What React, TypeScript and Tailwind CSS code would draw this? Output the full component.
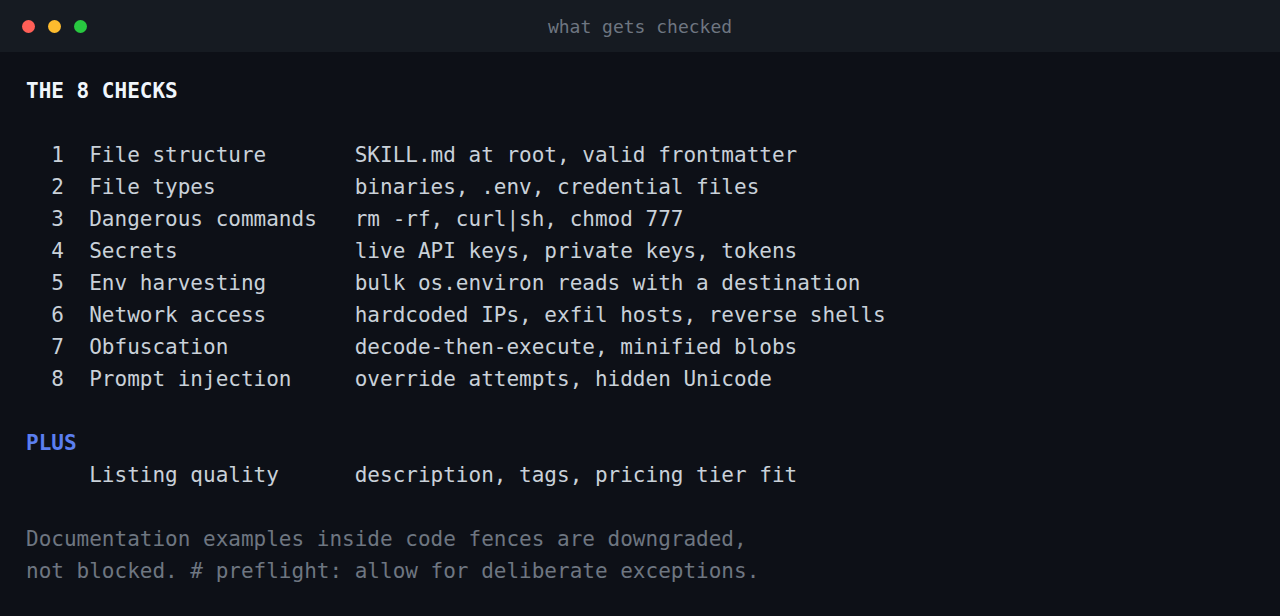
import React from 'react';

const checks = [
  ['File structure', 'SKILL.md at root, valid frontmatter'],
  ['File types', 'binaries, .env, credential files'],
  ['Dangerous commands', 'rm -rf, curl|sh, chmod 777'],
  ['Secrets', 'live API keys, private keys, tokens'],
  ['Env harvesting', 'bulk os.environ reads with a destination'],
  ['Network access', 'hardcoded IPs, exfil hosts, reverse shells'],
  ['Obfuscation', 'decode-then-execute, minified blobs'],
  ['Prompt injection', 'override attempts, hidden Unicode'],
];

export default function App() {
  return (
    <div className="w-[1280px] h-[616px] bg-[#0d1017] overflow-hidden flex flex-col font-['DejaVu_Sans_Mono',monospace]">
      {/* Title bar */}
      <div className="h-[52px] shrink-0 bg-[#161b22] flex items-center px-[22px] relative">
        <div className="flex gap-[13px]">
          <span className="w-[13px] h-[13px] rounded-full bg-[#ff5f57]" />
          <span className="w-[13px] h-[13px] rounded-full bg-[#febc2e]" />
          <span className="w-[13px] h-[13px] rounded-full bg-[#28c840]" />
        </div>
        <div className="absolute inset-0 flex items-center justify-center text-[18px] text-[#6e7681]">
          what gets checked
        </div>
      </div>

      {/* Body */}
      <pre className="px-[26px] pt-[23px] text-[21px] leading-[32px] text-[#c9d1d9] whitespace-pre font-['DejaVu_Sans_Mono',monospace]">
        <div className="font-bold text-[#f0f6fc]">THE 8 CHECKS</div>
        <div>{' '}</div>
        {checks.map(([name, desc], i) => (
          <div key={name}>
            {'  ' + (i + 1) + '  ' + name.padEnd(21, ' ') + desc}
          </div>
        ))}
        <div>{' '}</div>
        <div className="font-bold text-[#5b7ff0]">PLUS</div>
        <div>{'     ' + 'Listing quality'.padEnd(21, ' ') + 'description, tags, pricing tier fit'}</div>
        <div>{' '}</div>
        <div className="text-[#6e7681]">Documentation examples inside code fences are downgraded,</div>
        <div className="text-[#6e7681]">not blocked. # preflight: allow for deliberate exceptions.</div>
      </pre>
    </div>
  );
}
